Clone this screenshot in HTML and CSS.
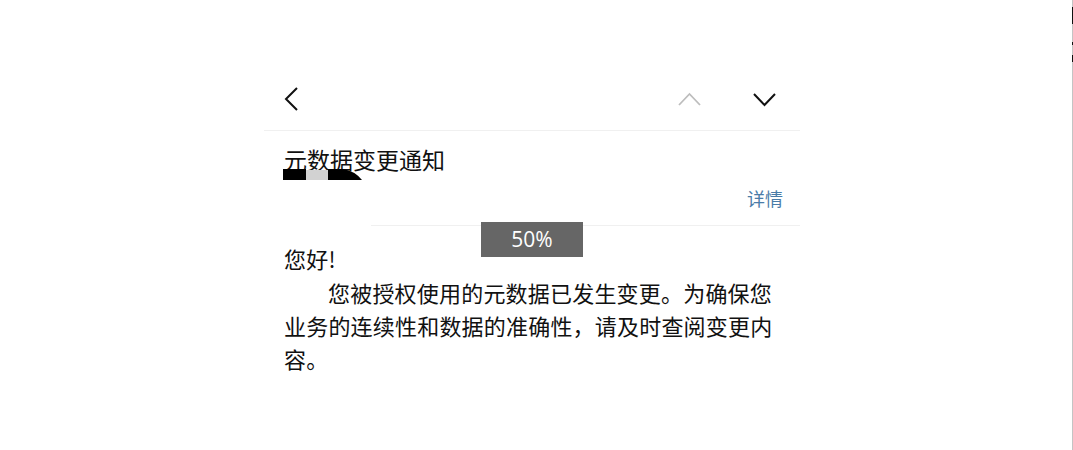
FILE: index.html
```html
<!DOCTYPE html>
<html lang="zh-CN">
<head>
<meta charset="utf-8">
<title>元数据变更通知</title>
<link rel="stylesheet" href="styles.css">
</head>
<body>
<div class="page">
  <div class="card">
    <div class="nav">
      <svg class="icon" viewBox="0 0 24 24" width="24" height="24"><path d="M17 1 L6 12 L17 23" fill="none" stroke="#111" stroke-width="2"/></svg>
      <div class="nav-right">
        <svg class="icon" viewBox="0 0 24 24" width="24" height="24"><path d="M1 18 L11.5 7 L22 18" fill="none" stroke="#bdbdbd" stroke-width="1.8"/></svg>
        <svg class="icon" viewBox="0 0 24 24" width="24" height="24"><path d="M1 7 L11.5 18 L22 7" fill="none" stroke="#111" stroke-width="2"/></svg>
      </div>
    </div>
    <div class="divider"></div>
    <div class="head">
      <h1 class="title">元数据变更通知</h1>
      <svg class="redact" viewBox="0 0 80 12" width="80" height="12"><rect x="0" y="1" width="23" height="11" fill="#000"/><rect x="23" y="2" width="22" height="10" fill="#d2d2d2"/><path d="M45 1 L60 1 Q72 3 79 12 L45 12 Z" fill="#000"/></svg>
      <div class="detail-row"><span class="detail">详情</span></div>
    </div>
    <div class="divider short"></div>
    <div class="zoom-badge">50%</div>
    <div class="content">
      <p class="greet">您好!</p>
      <p class="para">您被授权使用的元数据已发生变更。为确保您业务的连续性和数据的准确性，请及时查阅变更内容。</p>
    </div>
  </div>
  <div class="rail">
    <span class="thumb t1"></span>
    <span class="thumb t2"></span>
    <span class="thumb t3"></span>
  </div>
</div>
</body>
</html>
```

FILE: styles.css
```css
html, body {
  margin: 0;
  padding: 0;
  background: #fff;
}
body {
  font-family: "Noto Sans CJK SC", "Noto Sans", sans-serif;
  color: #111;
}
.page {
  position: relative;
  width: 1073px;
  height: 450px;
  overflow: hidden;
}
.card {
  position: relative;
  width: 536px;
  margin-left: 264px;
  padding-top: 76px;
}
.nav {
  height: 54px;
  box-sizing: border-box;
  padding: 11px 23px 0 16px;
  display: flex;
  align-items: flex-start;
}
.icon {
  display: block;
}
.nav-right {
  margin-left: auto;
  display: flex;
  gap: 51px;
}
.divider {
  height: 1px;
  background: #f0f0f0;
}
.divider.short {
  margin-left: 107px;
}
.head {
  padding: 17px 17px 0 20px;
  height: 94px;
  box-sizing: border-box;
}
.title {
  margin: 0;
  font-size: 23px;
  font-weight: 400;
  line-height: 23px;
}
.redact {
  display: block;
  margin-left: -1px;
  margin-top: -3px;
}
.detail-row {
  display: flex;
  justify-content: flex-end;
  margin-top: 6px;
}
.detail {
  font-size: 18px;
  line-height: 24px;
  color: #4a7ca8;
}
.zoom-badge {
  position: absolute;
  left: 217px;
  top: 222px;
  width: 102px;
  height: 35px;
  background: #666;
  color: #fff;
  font-family: "Open Sans", "Noto Sans", sans-serif;
  font-size: 21px;
  line-height: 35px;
  text-align: center;
}
.content {
  padding: 16px 20px 0 20px;
  font-size: 22px;
  line-height: 33px;
  letter-spacing: 0.2px;
}
.content p {
  margin: 0;
}
.greet {
  margin-bottom: 1px !important;
}
.para {
  text-indent: 2em;
}
.rail {
  position: absolute;
  top: 0;
  right: 0;
  width: 1px;
  height: 450px;
  background: #c4c4c4;
}
.thumb {
  position: absolute;
  left: 0;
  width: 1px;
  background: #111;
}
.t1 { top: 7px; height: 17px; }
.t2 { top: 42px; height: 3px; }
.t3 { top: 55px; height: 7px; }
```
